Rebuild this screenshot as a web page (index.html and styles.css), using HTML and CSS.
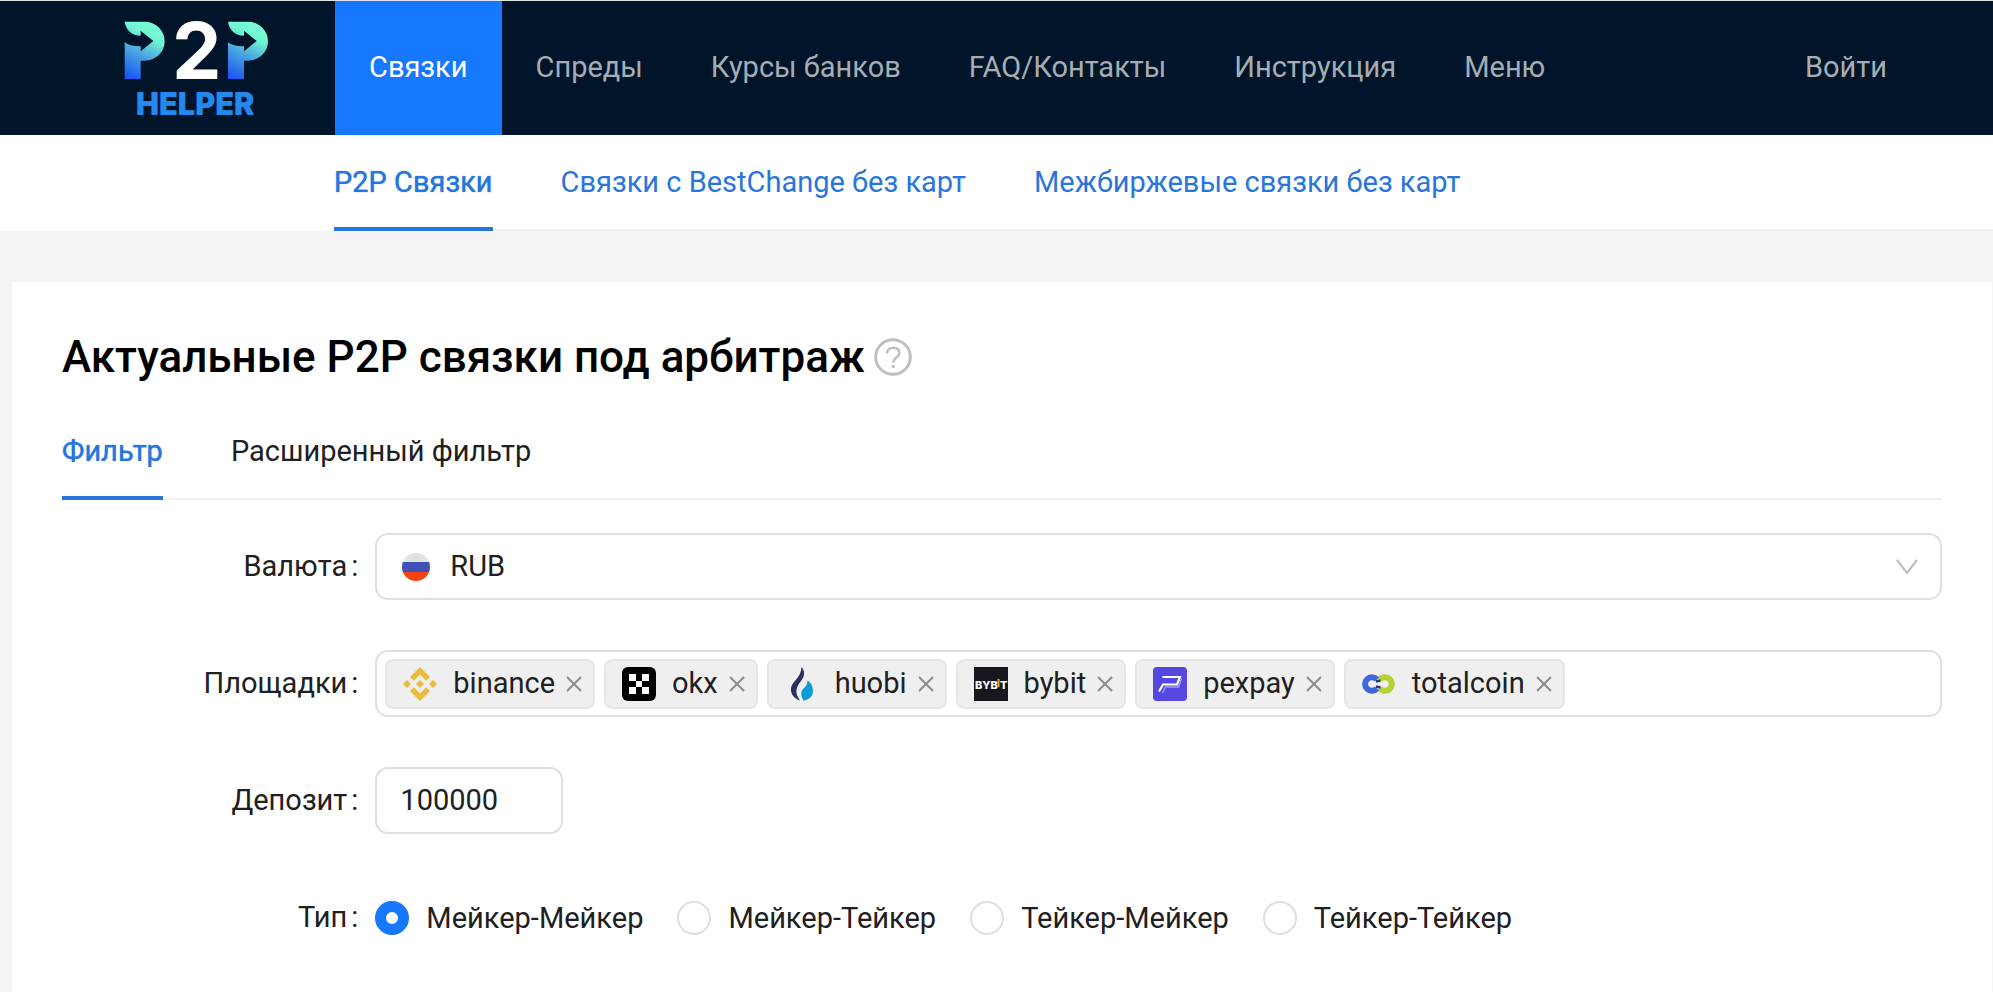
FILE: index.html
```html
<!DOCTYPE html>
<html lang="ru">
<head>
<meta charset="utf-8">
<meta name="viewport" content="width=device-width, initial-scale=1">
<title>P2P Helper</title>
<link rel="stylesheet" href="styles.css">
</head>
<body>
<header class="header">
  <a class="logo" href="#" aria-label="P2P Helper">
    <svg class="logo-art" viewBox="0 0 441 291">
      <defs>
        <linearGradient id="mint" gradientUnits="userSpaceOnUse" x1="20" y1="176" x2="95" y2="30">
          <stop offset="0" stop-color="#1a55f5"/>
          <stop offset=".5" stop-color="#4ba6e0"/>
          <stop offset=".85" stop-color="#70f7d2"/>
          <stop offset="1" stop-color="#76fbd4"/>
        </linearGradient>
        <path id="mark" d="M5 5H65A60 58.500 0 0 1 65 122H53V177H5V67Q22 80 53 79V94L91 63L53 32V47Q12 45 5 5Z"/>
      </defs>
      <use href="#mark" fill="url(#mint)"/>
      <use href="#mark" x="310" fill="url(#mint)"/>
      <text class="logo-two" x="221" y="176">2</text>
      <text class="logo-word" x="217" y="286">HELPER</text>
    </svg>
  </a>
  <nav class="nav">
    <a class="nav-item nav-item-active" href="#">Связки</a>
    <a class="nav-item" href="#">Спреды</a>
    <a class="nav-item" href="#">Курсы банков</a>
    <a class="nav-item" href="#">FAQ/Контакты</a>
    <a class="nav-item" href="#">Инструкция</a>
    <a class="nav-item" href="#">Меню</a>
  </nav>
  <a class="nav-item login" href="#">Войти</a>
</header>

<div class="subnav">
  <nav class="tabs">
    <a class="tab tab-link tab-active" href="#">P2P Связки</a>
    <a class="tab tab-link" href="#">Связки с BestChange без карт</a>
    <a class="tab tab-link" href="#">Межбиржевые связки без карт</a>
  </nav>
</div>

<main class="card">
  <h1 class="title">Актуальные P2P связки под арбитраж
    <svg class="help" viewBox="0 0 38 38" fill="none" stroke="#bfbfbf" stroke-width="3">
      <circle cx="19" cy="19" r="17.3"/>
      <path d="M13 15.500C13 8 25.500 8 25.500 15C25.500 19.500 19.300 19 19.300 24.500" stroke-width="2.400"/>
      <circle cx="19.300" cy="28.500" r="1.700" fill="#bfbfbf" stroke="none"/>
    </svg>
  </h1>

  <div class="tabs filter-tabs" role="tablist">
    <button class="tab tab-active" type="button" role="tab" aria-selected="true">Фильтр</button>
    <button class="tab" type="button" role="tab" aria-selected="false">Расширенный фильтр</button>
  </div>

  <form class="form">
    <div class="row">
      <label class="label" for="currency">Валюта</label>
      <div class="field select">
        <svg class="flag" viewBox="0 0 28 28">
          <clipPath id="round"><circle cx="14" cy="14" r="14"/></clipPath>
          <g clip-path="url(#round)">
            <path fill="#dfe3e3" d="M0 0h28v9H0z"/>
            <path fill="#3f51b5" d="M0 9h28v10H0z"/>
            <path fill="#f4430f" d="M0 19h28v9H0z"/>
          </g>
        </svg>
        <select class="select-control" id="currency"><option>RUB</option></select>
        <svg class="chevron" viewBox="0 0 22 16" fill="none" stroke="#bfbfbf" stroke-width="2.200"><path d="M1 1L11 14L21 1"/></svg>
      </div>
    </div>

    <div class="row">
      <label class="label" for="exchanges">Площадки</label>
      <div class="field tags">
        <span class="tag">
          <svg class="tag-icon" viewBox="0 0 34 34" fill="#ecbb3c">
            <path d="M17 0L27 10L23.200 13.800L17 7.600L10.800 13.800L7 10ZM17 34L27 24L23.200 20.200L17 26.400L10.800 20.200L7 24ZM17 13L21 17L17 21L13 17ZM4 13L8 17L4 21L0 17ZM30 13L34 17L30 21L26 17Z"/>
          </svg>
          <span class="tag-text">binance</span>
          <button class="close" type="button" aria-label="Удалить binance"><svg class="cross" viewBox="0 0 16 16"><path d="M1 1L15 15M15 1L1 15"/></svg></button>
        </span>
        <span class="tag">
          <svg class="tag-icon" viewBox="0 0 34 34">
            <rect width="34" height="34" rx="6"/>
            <path fill="#fff" d="M7 7h7v7h-7zM20 7h7v7h-7zM14 14h6v6h-6zM7 20h7v7h-7zM20 20h7v7h-7z"/>
          </svg>
          <span class="tag-text">okx</span>
          <button class="close" type="button" aria-label="Удалить okx"><svg class="cross" viewBox="0 0 16 16"><path d="M1 1L15 15M15 1L1 15"/></svg></button>
        </span>
        <span class="tag">
          <svg class="tag-icon" viewBox="0 0 34 34">
            <path fill="#2a3060" d="M16.500 0C20 4 20 9 16 14C13 18 11 21 11.500 26C12 29 13.500 31 15 33.500C9 31.500 5.500 27 6 21.500C6.500 14 16 12 16.500 0Z"/>
            <path fill="#0a9bd8" d="M22.500 13.500C26.500 16 28 20 28 24C28 29 24 33 18.500 33.500C15 27 16 24 19 21C21.500 18.500 22.500 17 22.500 13.500Z"/>
          </svg>
          <span class="tag-text">huobi</span>
          <button class="close" type="button" aria-label="Удалить huobi"><svg class="cross" viewBox="0 0 16 16"><path d="M1 1L15 15M15 1L1 15"/></svg></button>
        </span>
        <span class="tag">
          <svg class="tag-icon" viewBox="0 0 34 34">
            <rect width="34" height="34" fill="#16181d"/>
            <text class="bybit-word" x="1" y="22">BYB</text>
            <path fill="#f5a623" d="M23.500 12h2v8h-2z"/>
            <text class="bybit-word" x="26" y="22">T</text>
          </svg>
          <span class="tag-text">bybit</span>
          <button class="close" type="button" aria-label="Удалить bybit"><svg class="cross" viewBox="0 0 16 16"><path d="M1 1L15 15M15 1L1 15"/></svg></button>
        </span>
        <span class="tag">
          <svg class="tag-icon" viewBox="0 0 34 34" fill="none">
            <rect width="34" height="34" rx="4" fill="#5547e0"/>
            <path stroke="#fff" stroke-width="2.200" d="M9.500 10H27L24 17.500H10L6 24.500"/>
            <path stroke="#a9a2f4" stroke-width="1.300" d="M28.500 11.500L25.500 20H12.500L9.500 26"/>
          </svg>
          <span class="tag-text">pexpay</span>
          <button class="close" type="button" aria-label="Удалить pexpay"><svg class="cross" viewBox="0 0 16 16"><path d="M1 1L15 15M15 1L1 15"/></svg></button>
        </span>
        <span class="tag">
          <svg class="tag-icon" viewBox="0 0 34 34" fill="none">
            <path stroke="#b4d333" stroke-width="6" d="M17.500 13A6.800 6.800 0 1 1 17.500 21"/>
            <path stroke="#4165db" stroke-width="6" d="M15 12.500A6.800 6.800 0 1 0 15 21.500"/>
            <path stroke="#27377e" stroke-width="2.500" d="M14 14.500L18.500 13.500M14 19.500L18.500 20.500"/>
          </svg>
          <span class="tag-text">totalcoin</span>
          <button class="close" type="button" aria-label="Удалить totalcoin"><svg class="cross" viewBox="0 0 16 16"><path d="M1 1L15 15M15 1L1 15"/></svg></button>
        </span>
        <input class="tag-search" id="exchanges" type="text">
      </div>
    </div>

    <div class="row">
      <label class="label" for="deposit">Депозит</label>
      <input class="field deposit" id="deposit" type="text" inputmode="numeric" value="100000">
    </div>

    <div class="row" role="radiogroup" aria-labelledby="type-label">
      <span class="label" id="type-label">Тип</span>
      <div class="radios">
        <label class="radio"><input class="radio-input" type="radio" name="type" checked>Мейкер-Мейкер</label>
        <label class="radio"><input class="radio-input" type="radio" name="type">Мейкер-Тейкер</label>
        <label class="radio"><input class="radio-input" type="radio" name="type">Тейкер-Мейкер</label>
        <label class="radio"><input class="radio-input" type="radio" name="type">Тейкер-Тейкер</label>
      </div>
    </div>
  </form>
</main>
</body>
</html>
```

FILE: styles.css
```css
* {
  box-sizing: border-box;
}

body {
  display: flex;
  flex-direction: column;
  min-height: 100vh;
  margin: 0;
  background: #f4f4f4;
  color: #202020;
  font-family: Roboto, "Noto Sans", sans-serif;
  font-size: 29px;
  line-height: 46px;
}

a {
  text-decoration: none;
}

button,
input,
select {
  margin: 0;
  padding: 0;
  border: 0;
  background: none;
  color: inherit;
  font: inherit;
}

.header {
  display: flex;
  align-items: stretch;
  height: 135px;
  padding: 0 72px 0 123px;
  border-top: 1px solid #dfe5e5;
  background: #001529;
}

.logo {
  width: 147px;
  margin-right: 65px;
  padding-top: 19px;
}

.logo-art {
  display: block;
  width: 147px;
  height: 97px;
  overflow: visible;
}

.logo-two,
.logo-word {
  font-family: Inter, "Liberation Sans", sans-serif;
  text-anchor: middle;
}

.logo-two {
  fill: #fff;
  font-size: 236px;
  font-weight: 700;
}

.logo-word {
  fill: #2389ec;
  font-size: 92px;
  font-weight: 900;
}

.nav {
  display: flex;
}

.nav-item {
  padding: 0 34px;
  color: #a6adb4;
  line-height: 132px;
}

.nav-item-active {
  background: #1677ff;
  color: #fff;
}

.login {
  margin-left: auto;
}

.subnav {
  padding-left: 334px;
  background: #fff;
}

.tabs {
  display: flex;
  gap: 68px;
  border-bottom: 2px solid #f0f0f0;
}

.tab {
  margin-bottom: -2px;
  padding: 24px 0 22px;
  border-bottom: 4px solid transparent;
  cursor: pointer;
}

.tab-link {
  color: #2876dc;
}

.tab-active {
  border-bottom-color: #2876dc;
  color: #2876dc;
  text-shadow: 0 0 1px #2876dc;
}

.card {
  flex: 1;
  margin: 51px 1px 0 12px;
  padding: 50px;
  background: #fff;
}

.title {
  display: flex;
  align-items: center;
  gap: 9px;
  margin: 0 0 22px;
  color: #000;
  font-size: 44px;
  font-weight: 500;
  line-height: 50px;
}

.help {
  width: 38px;
  height: 38px;
}

.filter-tabs {
  margin-bottom: 33px;
}

.form {
  display: flex;
  flex-direction: column;
  gap: 50px;
}

.row {
  display: grid;
  grid-template-columns: 1fr 5fr;
  align-items: center;
  min-height: 67px;
}

.label {
  padding: 0 17px 2px 0;
  text-align: right;
}

.label::after {
  content: ":";
  margin-left: 4px;
}

.field {
  min-height: 67px;
  border: 2px solid #dfdfdf;
  border-radius: 13px;
}

.select {
  display: flex;
  align-items: center;
  gap: 20px;
  padding: 0 22px 0 25px;
}

.flag {
  width: 28px;
  height: 28px;
}

.select-control {
  flex: 1;
  padding-bottom: 2px;
  appearance: none;
}

.chevron {
  width: 22px;
  height: 16px;
}

.tags {
  display: flex;
  flex-wrap: wrap;
  align-items: center;
  gap: 9px;
  padding: 0 8px;
}

.tag {
  display: flex;
  align-items: center;
  height: 50px;
  padding: 0 11px 0 16px;
  border: 2px solid #e6e6e6;
  border-radius: 8px;
  background: #efefef;
}

.tag-icon {
  width: 34px;
  height: 34px;
}

.tag-text {
  margin: 0 11px 0 16px;
  padding-bottom: 2px;
}

.bybit-word {
  fill: #fff;
  font-family: Inter, "Liberation Sans", sans-serif;
  font-size: 11px;
  font-weight: 800;
}

.close {
  display: flex;
  cursor: pointer;
}

.cross {
  width: 16px;
  height: 16px;
  fill: none;
  stroke: #8c8c8c;
  stroke-width: 2;
}

.tag-search {
  flex: 1;
  min-width: 20px;
  outline: none;
}

.deposit {
  width: 188px;
  padding: 0 23px 2px;
}

.radios {
  display: flex;
  flex-wrap: wrap;
  gap: 34px;
}

.radio {
  display: flex;
  align-items: center;
  gap: 17px;
}

.radio-input {
  width: 34px;
  height: 34px;
  border: 2px solid #dfdfdf;
  border-radius: 50%;
  background: #fff;
  appearance: none;
}

.radio-input:checked {
  border: 11px solid #1677ff;
}
```
